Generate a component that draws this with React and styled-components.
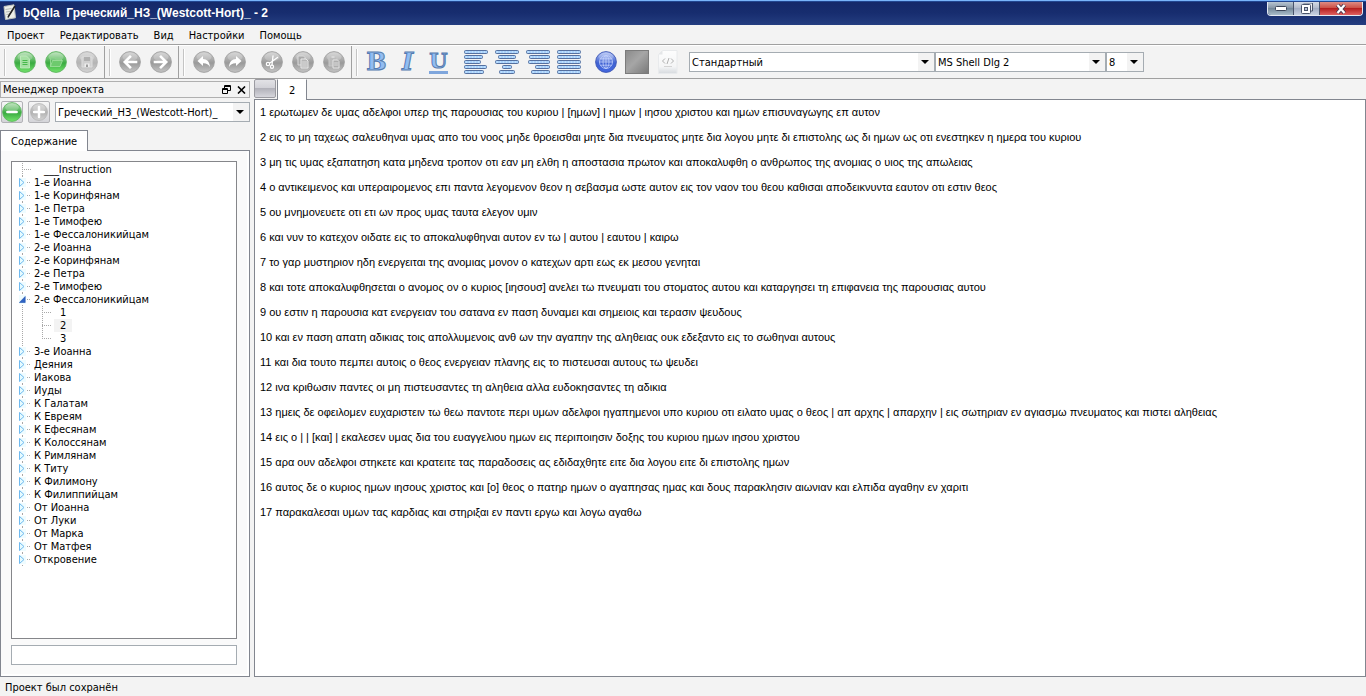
import React, { useState } from "react";
import styled, { createGlobalStyle, css } from "styled-components";

const GlobalStyle = createGlobalStyle`
  *, *::before { box-sizing: border-box; }
  body { margin: 0; background: #f3f3f3; }
  body, button, input, select {
    font-family: "DejaVu Sans Condensed", "DejaVu Sans", sans-serif;
    font-size: 11px;
    line-height: 13px;
    color: #000;
  }
  button { margin: 0; padding: 0; border: 0; background: none; }
  ul { list-style: none; margin: 0; padding: 0; }
`;

const Window = styled.div`
  display: flex;
  flex-direction: column;
  min-height: 100vh;
`;

/* Title bar */
const TitleBar = styled.header`
  display: flex;
  height: 25px;
  padding: 0 3px;
  border-top: 1px solid #78b4fa;
  background: linear-gradient(#2f63b8 0, #14296a 1px, #172d6f 12px, #243d80 100%);
`;
const AppIcon = styled.svg`
  width: 13px;
  height: 16px;
  margin: 3px 7px 0 0;
`;
const Title = styled.h1`
  flex: 1;
  margin: 0;
  font: bold 12px/24px "Liberation Sans", Arial, sans-serif;
  white-space: pre;
  color: #fff;
`;
const WindowButtons = styled.div`
  display: flex;
  height: 14px;
  margin-top: 1px;
  border: 1px solid #e4e9f2;
  border-top: 0;
  border-radius: 0 0 4px 4px;
  overflow: hidden;
`;
const windowButtonColours = {
  plain: "linear-gradient(#b9c6d2 0, #8797a8 45%, #74889a 50%, #a9bcc9 100%)",
  light: "linear-gradient(#d5dbe5 0, #b3bccd 45%, #a3aec4 50%, #c9d3e2 100%)",
  close: "linear-gradient(#dd8d84 0, #cc5046 45%, #b5201f 50%, #e06060 100%)",
};
const WindowButton = styled.button`
  display: grid;
  place-items: center;
  width: ${(p) => (p.$tone === "close" ? 42 : 26)}px;
  border-right: 1px solid #49546b;
  background: ${(p) => windowButtonColours[p.$tone]};
  &:last-child { border-right: 0; }
`;

/* Menu */
const MenuBar = styled.nav`
  display: flex;
  gap: 15px;
  height: 20px;
  padding: 0 7px;
  border-bottom: 1px solid #a0a0a0;
`;
const MenuItem = styled.button`
  line-height: 21px;
`;

/* Toolbar */
const ToolBar = styled.div`
  display: flex;
  height: 34px;
  border-top: 1px solid #fff;
  border-bottom: 1px solid #a0a0a0;
`;
const ToolGroup = styled.div`
  display: flex;
  align-items: center;
  padding: 0 2px 0 4px;
  ${(p) => !p.$last && css`border-right: 1px solid #a0a0a0;`}
  &::before {
    content: "";
    width: 2px;
    height: 27px;
    margin-right: 3px;
    border-left: 1px solid #c4c4c4;
    border-right: 1px solid #fff;
  }
`;
const ToolButton = styled.button`
  display: grid;
  place-items: center;
  width: 31px;
  height: 32px;
`;
const Gap = styled.span`
  width: 6px;
`;

/* Drop-down lists */
const SelectBox = styled.span`
  display: grid;
  align-items: center;
  width: ${(p) => p.$width};
  height: 20px;
  border: 1px solid #a5acb2;
  background: linear-gradient(to left, #f3f3f3 16px, #fff 16px);
  & > * { grid-area: 1 / 1; }
  & > svg {
    justify-self: end;
    margin-right: 5px;
    pointer-events: none;
  }
`;
const Select = styled.select`
  appearance: none;
  width: 100%;
  height: 18px;
  padding: 0 18px 0 2px;
  border: 0;
  background: none;
  font-size: 11px;
`;

/* Main area */
const Main = styled.div`
  display: flex;
  flex: 1;
  gap: 4px;
`;
const Dock = styled.aside`
  display: flex;
  flex-direction: column;
  width: 250px;
  padding-top: 2px;
`;
const DockTitle = styled.div`
  display: flex;
  align-items: center;
  gap: 5px;
  height: 17px;
  padding: 0 3px 0 2px;
  border: 1px solid #b0b0b0;
`;
const DockName = styled.h2`
  flex: 1;
  margin: 0;
  font-size: 11px;
  font-weight: normal;
`;
const DockButton = styled.button`
  display: grid;
  place-items: center;
  width: 10px;
  height: 11px;
`;
const DockTools = styled.div`
  display: flex;
  align-items: center;
  gap: 5px;
  padding: 3px 0 7px 1px;
`;
const SquareButton = styled.button`
  display: grid;
  place-items: center;
  width: 22px;
  height: 22px;
  border: 1px solid #b2b2b6;
  border-radius: 2px;
  background: linear-gradient(#f6f6f6, #d4d4d8);
`;
const Tab = styled.button`
  position: relative;
  align-self: flex-start;
  height: 21px;
  padding: 0 ${(p) => (p.$flat ? 11 : 10)}px;
  margin-bottom: -1px;
  border: 1px solid #82868f;
  border-bottom: 0;
  border-top-color: ${(p) => (p.$flat ? "#fff" : "#82868f")};
  background: #fff;
`;
const DockPanel = styled.div`
  display: flex;
  flex: 1;
  flex-direction: column;
  gap: 6px;
  padding: 10px 12px 11px 10px;
  border: 1px solid #82868f;
  background: #fafafa;
  box-shadow: inset -2px -2px #fff;
`;
const Tree = styled.ul`
  flex: 1;
  padding: 1px 7px;
  border: 1px solid #85868a;
  background: #fff;
`;
const TreeNode = styled.li`
  background: linear-gradient(#a8a8a8 50%, transparent 50%) 3px 0 / 1px 2px repeat-y;
`;
const TreeRow = styled.div`
  display: flex;
  align-items: center;
  height: 13px;
`;
const Expander = styled.button`
  display: grid;
  width: 7px;
  height: 9px;
  background: #effcff;
`;
const Branch = styled.span`
  width: ${(p) => p.$width}px;
  height: 1px;
  margin: 0 3px 0 ${(p) => p.$indent}px;
  background: linear-gradient(to right, #a8a8a8 50%, transparent 50%) 0 0 / 2px 1px repeat-x;
`;
const TreeLabel = styled.span`
  padding-left: ${(p) => p.$pad || 0}px;
  white-space: nowrap;
`;
const Children = styled.ul`
  margin-left: 23px;
  background: repeating-linear-gradient(#a8a8a8 0 1px, transparent 1px 2px) 0 0 / 1px 33px no-repeat;
`;
const ChildRow = styled.li`
  display: flex;
  align-items: center;
  height: 13px;
`;
const ChildLabel = styled.span`
  width: 18px;
  padding-left: 6px;
  background: ${(p) => (p.$current ? "#f3f3f3" : "#fff")};
`;
const Filter = styled.input`
  height: 20px;
  padding: 0 3px;
  border: 1px solid #a5acb2;
  background: #fff;
  outline: 0;
`;

/* Document */
const Editor = styled.main`
  display: flex;
  flex: 1;
  flex-direction: column;
  min-width: 0;
`;
const PageTabs = styled.div`
  display: flex;
  align-items: flex-start;
  gap: 1px;
  height: 20px;
`;
const CloseTab = styled.button`
  width: 22px;
  height: 19px;
  border: 1px solid #9b9ba1;
  border-radius: 2px;
  background: linear-gradient(#e2e2e6 0, #d2d2d8 45%, #b2b2ba 50%, #d6d6dc 100%);
`;
const Page = styled.article`
  flex: 1;
  padding: 6px 5px;
  border: 1px solid #82868f;
  background: #fff;
  font-family: "Liberation Sans", Arial, sans-serif;
`;
const Verse = styled.p`
  margin: 0 0 12px;
`;
const StatusBar = styled.footer`
  height: 19px;
  padding-left: 5px;
  line-height: 21px;
`;

/* Icons */
const Arrow = () => (
  <svg width="8" height="4" viewBox="0 0 8 4" aria-hidden="true">
    <path d="M0 0h8L4 4z" fill="#000" />
  </svg>
);

const balls = {
  green: ["#b5dfb3", "#3aab41", "#74e46c", "#5bb45d"],
  grey: ["#cfcfcf", "#9a9a9a", "#c4c4c4", "#a0a0a0"],
  pale: ["#d2d2d2", "#b4b4b4", "#d4d4d4", "#b2b2b2"],
  blue: ["#b3c4f6", "#3f62d2", "#4468e0", "#3c56b4"],
};
const Ball = ({ tone, size = 22, children }) => {
  const [top, middle, bottom, rim] = balls[tone];
  const id = `ball-${tone}`;
  return (
    <svg width={size} height={size} viewBox="0 0 22 22" aria-hidden="true">
      <defs>
        <linearGradient id={id} x1="0" y1="0" x2="0" y2="1">
          <stop offset="0" stopColor={top} />
          <stop offset="0.55" stopColor={middle} />
          <stop offset="1" stopColor={bottom} />
        </linearGradient>
      </defs>
      <circle cx="11" cy="11" r="10.4" fill={`url(#${id})`} stroke={rim} strokeWidth="0.9" />
      <ellipse cx="11" cy="6" rx="7.4" ry="4.4" fill="#fff" opacity="0.2" />
      {children}
    </svg>
  );
};

const line = { fill: "none", stroke: "#fff", strokeWidth: 1, strokeLinecap: "round", strokeLinejoin: "round" };
const NewIcon = () => (
  <Ball tone="green">
    <path d="M6.500 5h6l3 3v9h-9z" fill="#a5e0a3" stroke="#c5ecc2" strokeWidth="0.8" />
    <path d="M8.500 9.500h5M8.500 11.500h5M8.500 13.500h5" fill="none" stroke="#47b84b" />
  </Ball>
);
const OpenIcon = () => (
  <Ball tone="green">
    <path d="M5.500 15.500v-9h4l1 1.500h6v2" {...line} stroke="#8fd78e" />
    <path d="M5.500 15.500l2-6h10l-2.500 6z" fill="#6dca6d" stroke="#a2dfa0" strokeWidth="0.8" />
  </Ball>
);
const SaveIcon = () => (
  <Ball tone="pale">
    <path d="M6 6h10v10H6z" fill="#cfcfcf" stroke="#dedede" />
    <path d="M8 6v4h6V6z" fill="#b0b0b0" />
    <path d="M8.500 12.500h5V16h-5z" fill="#eee" />
    <path d="M10 13.500h2V16h-2z" fill="#9d9d9d" />
  </Ball>
);
const BackIcon = () => (
  <Ball tone="grey">
    <path d="M17 11H6.500M11 5.800 5.800 11l5.200 5.200" {...line} strokeWidth="2.600" strokeLinejoin="miter" strokeLinecap="square" />
  </Ball>
);
const ForwardIcon = () => (
  <Ball tone="grey">
    <path d="M5 11h10.500M11 5.800l5.200 5.200-5.200 5.200" {...line} strokeWidth="2.600" strokeLinejoin="miter" strokeLinecap="square" />
  </Ball>
);
const UndoIcon = () => (
  <Ball tone="grey">
    <path d="M4.500 10 10 5v3c4 .2 6.500 2.500 7 8-1.600-2.800-3.500-3.900-7-3.800V15z" fill="#fff" />
  </Ball>
);
const RedoIcon = () => (
  <Ball tone="grey">
    <path d="M17.500 10 12 5v3c-4 .2-6.500 2.500-7 8 1.600-2.800 3.500-3.900 7-3.800V15z" fill="#fff" />
  </Ball>
);
const CutIcon = () => (
  <Ball tone="grey">
    <path d="M16.500 6.500 8.500 12.200M12 5l-1 9" {...line} strokeWidth="1.300" />
    <circle cx="7" cy="13" r="1.700" {...line} strokeWidth="1.200" />
    <circle cx="11" cy="15.700" r="1.600" {...line} strokeWidth="1.200" />
  </Ball>
);
const CopyIcon = () => (
  <Ball tone="grey">
    <path d="M6 5h5.500l1.500 1.500V14H6z" fill="#aaa" stroke="#dcdcdc" />
    <path d="M9 8h5l2 2v7H9z" fill="#b6b6b6" stroke="#e8e8e8" />
    <path d="M10.500 11h4M10.500 13h4M10.500 15h4" {...line} stroke="#dedede" />
  </Ball>
);
const PasteIcon = () => (
  <Ball tone="grey">
    <path d="M6 6h8v9H6z" fill="#bcbcbc" stroke="#c8c8c8" />
    <path d="M8.500 5h3v2h-3z" fill="#d8d8d8" />
    <path d="M10 9h4.500l1.500 1.500V17h-6z" fill="#aeaeae" stroke="#e4e4e4" />
    <path d="M11.500 12h3M11.500 14h3" {...line} stroke="#dedede" />
  </Ball>
);
const GlobeIcon = () => (
  <Ball tone="blue">
    <g fill="none" stroke="#c3d1fb" strokeWidth="0.8">
      <circle cx="11" cy="11" r="6.500" />
      <ellipse cx="11" cy="11" rx="3" ry="6.500" />
      <path d="M11 4.500v13M4.500 11h13M5.500 7.800h11M5.500 14.200h11" />
    </g>
  </Ball>
);
const Letter = styled.span`
  font: ${(p) => (p.$italic ? "italic " : "")}bold ${(p) => (p.$under ? 21 : 24)}px/24px "DejaVu Serif", serif;
  color: #91bdf2;
  -webkit-text-stroke: 1px #567bb0;
  ${(p) => p.$under && css`
    height: 23px;
    line-height: 20px;
    border-bottom: 3px solid #7fa6dc;
  `}
`;
const bars = {
  left: [[0, 24], [0, 19], [0, 17], [0, 23], [0, 20]],
  center: [[0, 24], [3, 18], [0, 24], [7, 10], [4, 16]],
  right: [[0, 24], [3, 21], [2, 22], [9, 15], [5, 19]],
  full: [[0, 24], [0, 24], [0, 24], [0, 24], [0, 24]],
};
const AlignIcon = ({ kind }) => (
  <svg width="24" height="24" viewBox="0 0 24 24" aria-hidden="true">
    {bars[kind].map(([x, w], i) => (
      <g key={i}>
        <rect x={x + 0.5} y={i * 5 + 0.5} width={w - 1} height="3" rx="1" fill="#a9d2fb" stroke="#55709f" />
        <path d={`M${x + 2} ${i * 5 + 2}h${w - 4}`} stroke="#d3ebff" strokeDasharray="1 2" />
      </g>
    ))}
  </svg>
);
const ColourIcon = () => (
  <svg width="24" height="24" viewBox="0 0 24 24" aria-hidden="true">
    <defs>
      <linearGradient id="swatch" x1="0" y1="0" x2="1" y2="1">
        <stop offset="0" stopColor="#8a8a8a" />
        <stop offset="0.45" stopColor="#a6a6a6" />
        <stop offset="1" stopColor="#787878" />
      </linearGradient>
    </defs>
    <rect x="0.5" y="0.5" width="23" height="23" fill="url(#swatch)" stroke="#7b7b7b" />
  </svg>
);
const SourceIcon = () => (
  <svg width="20" height="24" viewBox="0 0 20 24" aria-hidden="true">
    <defs>
      <linearGradient id="paper" x1="0" y1="0" x2="0" y2="1">
        <stop offset="0" stopColor="#fdfdfd" />
        <stop offset="0.7" stopColor="#f4f5f6" />
        <stop offset="1" stopColor="#d6dade" />
      </linearGradient>
    </defs>
    <path d="M4.500.5H19v23H.5V4.500z" fill="url(#paper)" stroke="#e8eaec" />
    <path d="M.5 4.500h4v-4z" fill="#e4e6e8" />
    <path d="M7 8.500 4.500 11 7 13.500M13 8.500l2.500 2.500-2.500 2.500M11 8l-2 6" fill="none" stroke="#b0b0b0" />
    <path d="M6 16.500h8" stroke="#d4d4d4" />
  </svg>
);

const Closed = () => (
  <svg width="7" height="9" viewBox="0 0 7 9" aria-hidden="true">
    <path d="M.5.5v8l4.500-4z" fill="#e6fbff" stroke="#6fb9ef" />
  </svg>
);
const Opened = () => (
  <svg width="7" height="9" viewBox="0 0 7 9" aria-hidden="true">
    <path d="M6.200 1.500v6H.4z" fill="#2e63c4" stroke="#2456b0" strokeWidth="0.6" />
  </svg>
);

const menus = ["Проект", "Редактировать", "Вид", "Настройки", "Помощь"];
const books = [
  "1-е Иоанна", "1-е Коринфянам", "1-е Петра", "1-е Тимофею", "1-е Фессалоникийцам",
  "2-е Иоанна", "2-е Коринфянам", "2-е Петра", "2-е Тимофею", "2-е Фессалоникийцам",
  "3-е Иоанна", "Деяния", "Иакова", "Иуды", "К Галатам", "К Евреям", "К Ефесянам",
  "К Колоссянам", "К Римлянам", "К Титу", "К Филимону", "К Филиппийцам",
  "От Иоанна", "От Луки", "От Марка", "От Матфея", "Откровение",
];
const verses = [
  "1 ερωτωμεν δε υμας αδελφοι υπερ της παρουσιας του κυριου | [ημων] | ημων | ιησου χριστου και ημων επισυναγωγης επ αυτον",
  "2 εις το μη ταχεως σαλευθηναι υμας απο του νοος μηδε θροεισθαι μητε δια πνευματος μητε δια λογου μητε δι επιστολης ως δι ημων ως οτι ενεστηκεν η ημερα του κυριου",
  "3 μη τις υμας εξαπατηση κατα μηδενα τροπον οτι εαν μη ελθη η αποστασια πρωτον και αποκαλυφθη ο ανθρωπος της ανομιας ο υιος της απωλειας",
  "4 ο αντικειμενος και υπεραιρομενος επι παντα λεγομενον θεον η σεβασμα ωστε αυτον εις τον ναον του θεου καθισαι αποδεικνυντα εαυτον οτι εστιν θεος",
  "5 ου μνημονευετε οτι ετι ων προς υμας ταυτα ελεγον υμιν",
  "6 και νυν το κατεχον οιδατε εις το αποκαλυφθηναι αυτον εν τω | αυτου | εαυτου | καιρω",
  "7 το γαρ μυστηριον ηδη ενεργειται της ανομιας μονον ο κατεχων αρτι εως εκ μεσου γενηται",
  "8 και τοτε αποκαλυφθησεται ο ανομος ον ο κυριος [ιησουσ] ανελει τω πνευματι του στοματος αυτου και καταργησει τη επιφανεια της παρουσιας αυτου",
  "9 ου εστιν η παρουσια κατ ενεργειαν του σατανα εν παση δυναμει και σημειοις και τερασιν ψευδους",
  "10 και εν παση απατη αδικιας τοις απολλυμενοις ανθ ων την αγαπην της αληθειας ουκ εδεξαντο εις το σωθηναι αυτους",
  "11 και δια τουτο πεμπει αυτοις ο θεος ενεργειαν πλανης εις το πιστευσαι αυτους τω ψευδει",
  "12 ινα κριθωσιν παντες οι μη πιστευσαντες τη αληθεια αλλα ευδοκησαντες τη αδικια",
  "13 ημεις δε οφειλομεν ευχαριστειν τω θεω παντοτε περι υμων αδελφοι ηγαπημενοι υπο κυριου οτι ειλατο υμας ο θεος | απ αρχης | απαρχην | εις σωτηριαν εν αγιασμω πνευματος και πιστει αληθειας",
  "14 εις ο | | [και] | εκαλεσεν υμας δια του ευαγγελιου ημων εις περιποιησιν δοξης του κυριου ημων ιησου χριστου",
  "15 αρα ουν αδελφοι στηκετε και κρατειτε τας παραδοσεις ας εδιδαχθητε ειτε δια λογου ειτε δι επιστολης ημων",
  "16 αυτος δε ο κυριος ημων ιησους χριστος και [ο] θεος ο πατηρ ημων ο αγαπησας ημας και δους παρακλησιν αιωνιαν και ελπιδα αγαθην εν χαριτι",
  "17 παρακαλεσαι υμων τας καρδιας και στηριξαι εν παντι εργω και λογω αγαθω",
];

const Tool = ({ label, children }) => <ToolButton aria-label={label} title={label}>{children}</ToolButton>;
const DropDown = ({ label, value, width }) => (
  <SelectBox $width={width}>
    <Select aria-label={label} defaultValue={value}>
      <option>{value}</option>
    </Select>
    <Arrow />
  </SelectBox>
);

export default function App() {
  const [open, setOpen] = useState("2-е Фессалоникийцам");
  return (
    <Window>
      <GlobalStyle />
      <TitleBar>
        <AppIcon viewBox="0 0 13 16" aria-hidden="true">
          <path d="M1 2.500 11 .8l1.500 13L2.500 15.500z" fill="#eceee8" stroke="#bfc3bd" />
          <path d="M2.500 5.500l6-1M3 8l4-.6M3.500 10.500l3-.5" stroke="#b4b8b4" />
          <path d="M12 2 6 11.500l-1 2" stroke="#222" strokeWidth="1.600" />
        </AppIcon>
        <Title>{"bQella  Греческий_НЗ_(Westcott-Hort)_ - 2"}</Title>
        <WindowButtons>
          <WindowButton $tone="plain" aria-label="Свернуть">
            <svg width="12" height="5" viewBox="0 0 12 5"><rect x=".5" y=".5" width="11" height="4" rx="1" fill="#fff" stroke="#3b4558" /></svg>
          </WindowButton>
          <WindowButton $tone="light" aria-label="Восстановить">
            <svg width="12" height="11" viewBox="0 0 12 11">
              <path d="M2.500 0h9v8h-2" fill="#eef0f5" stroke="#4b556b" />
              <rect x=".5" y="1.500" width="9" height="9" rx="1" fill="#fff" stroke="#4b556b" />
              <rect x="3.500" y="4.500" width="3" height="3" fill="#b9c2d4" stroke="#4b556b" />
            </svg>
          </WindowButton>
          <WindowButton $tone="close" aria-label="Закрыть">
            <svg width="12" height="10" viewBox="0 0 12 10">
              <path d="M2.500 1 9.500 9M9.500 1 2.500 9" stroke="#4c3a50" strokeWidth="4" />
              <path d="M2.500 1 9.500 9M9.500 1 2.500 9" stroke="#fff" strokeWidth="2.200" />
            </svg>
          </WindowButton>
        </WindowButtons>
      </TitleBar>

      <MenuBar>{menus.map((m) => <MenuItem key={m}>{m}</MenuItem>)}</MenuBar>

      <ToolBar role="toolbar">
        <ToolGroup>
          <Tool label="Создать"><NewIcon /></Tool>
          <Tool label="Открыть"><OpenIcon /></Tool>
          <Tool label="Сохранить"><SaveIcon /></Tool>
        </ToolGroup>
        <ToolGroup>
          <Tool label="Назад"><BackIcon /></Tool>
          <Tool label="Вперёд"><ForwardIcon /></Tool>
        </ToolGroup>
        <ToolGroup>
          <Tool label="Отменить"><UndoIcon /></Tool>
          <Tool label="Повторить"><RedoIcon /></Tool>
          <Gap />
          <Tool label="Вырезать"><CutIcon /></Tool>
          <Tool label="Копировать"><CopyIcon /></Tool>
          <Tool label="Вставить"><PasteIcon /></Tool>
        </ToolGroup>
        <ToolGroup $last>
          <Tool label="Полужирный"><Letter>B</Letter></Tool>
          <Tool label="Курсив"><Letter $italic>I</Letter></Tool>
          <Tool label="Подчёркнутый"><Letter $under>U</Letter></Tool>
          <Gap />
          <Tool label="По левому краю"><AlignIcon kind="left" /></Tool>
          <Tool label="По центру"><AlignIcon kind="center" /></Tool>
          <Tool label="По правому краю"><AlignIcon kind="right" /></Tool>
          <Tool label="По ширине"><AlignIcon kind="full" /></Tool>
          <Gap />
          <Tool label="Ссылка"><GlobeIcon /></Tool>
          <Tool label="Цвет"><ColourIcon /></Tool>
          <Tool label="Исходный код"><SourceIcon /></Tool>
          <Gap />
          <DropDown label="Стиль" value="Стандартный" width="246px" />
          <DropDown label="Шрифт" value="MS Shell Dlg 2" width="171px" />
          <DropDown label="Размер" value="8" width="38px" />
        </ToolGroup>
      </ToolBar>

      <Main>
        <Dock>
          <DockTitle>
            <DockName>Менеджер проекта</DockName>
            <DockButton aria-label="Открепить">
              <svg width="9" height="9" viewBox="0 0 9 9">
                <path d="M2.500 3V.5h6v5H6M2.500 1.500h6M.5 3.500h5v5h-5zM.5 4.500h5" fill="none" stroke="#000" />
              </svg>
            </DockButton>
            <DockButton aria-label="Закрыть панель">
              <svg width="9" height="8" viewBox="0 0 9 8">
                <path d="M1 .5l7 7M8 .5l-7 7" stroke="#000" strokeWidth="1.600" />
              </svg>
            </DockButton>
          </DockTitle>
          <DockTools>
            <SquareButton aria-label="Удалить">
              <Ball tone="green" size={20}><path d="M6 11h10" {...line} strokeWidth="3" /></Ball>
            </SquareButton>
            <SquareButton aria-label="Добавить">
              <Ball tone="pale" size={18}><path d="M5 11h12M11 5v12" {...line} strokeWidth="3" /></Ball>
            </SquareButton>
            <DropDown label="Проект" value="Греческий_НЗ_(Westcott-Hort)_" width="196px" />
          </DockTools>
          <Tab role="tab" aria-selected="true">Содержание</Tab>
          <DockPanel>
            <Tree>
              <TreeNode>
                <TreeRow>
                  <Branch $width={10} $indent={3} />
                  <TreeLabel $pad={9}>___Instruction</TreeLabel>
                </TreeRow>
              </TreeNode>
              {books.map((name) => (
                <TreeNode key={name}>
                  <TreeRow>
                    <Expander
                      aria-label={name}
                      aria-expanded={open === name}
                      onClick={() => setOpen(open === name ? null : name)}
                    >
                      {open === name ? <Opened /> : <Closed />}
                    </Expander>
                    <Branch $width={4} $indent={1} />
                    <TreeLabel>{name}</TreeLabel>
                  </TreeRow>
                  {open === name && (
                    <Children>
                      {["1", "2", "3"].map((n) => (
                        <ChildRow key={n}>
                          <Branch $width={9} $indent={0} />
                          <ChildLabel $current={n === "2"}>{n}</ChildLabel>
                        </ChildRow>
                      ))}
                    </Children>
                  )}
                </TreeNode>
              ))}
            </Tree>
            <Filter aria-label="Фильтр" />
          </DockPanel>
        </Dock>
        <Editor>
          <PageTabs>
            <CloseTab aria-label="Закрыть вкладку" />
            <Tab role="tab" aria-selected="true" $flat>2</Tab>
          </PageTabs>
          <Page>{verses.map((v) => <Verse key={v}>{v}</Verse>)}</Page>
        </Editor>
      </Main>
      <StatusBar role="status">Проект был сохранён</StatusBar>
    </Window>
  );
}
